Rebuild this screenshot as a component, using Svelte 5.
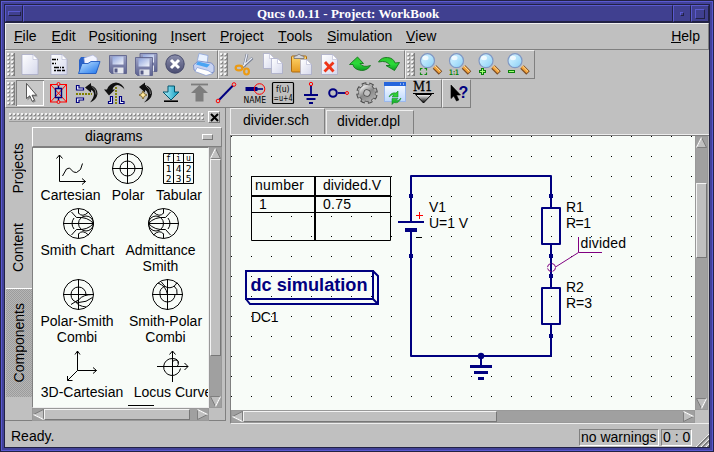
<script>
  const menus = [
    ['F', 'ile', 37.5], ['E', 'dit', 37], ['P', 'ositioning', 82, 'o'], ['I', 'nsert', 49.5],
    ['P', 'roject', 58], ['T', 'ools', 49], ['S', 'imulation', 79], ['V', 'iew', 40]
  ];

  const page = (x, y, w, h) =>
    `<path d="M${x} ${y}h${w - 5}l5 5v${h - 5}h${-w}z" fill="url(#paper)" stroke="#a3a6c4" stroke-width=".7"/><path d="M${x + w - 5} ${y}v5h5z" fill="#fff" stroke="#b3b6d0" stroke-width=".6"/>`;
  const floppy = (x, y) =>
    `<path d="M${x} ${y}h17v18h-15l-2-2z" fill="url(#steel)" stroke="#555a86" stroke-width=".8"/><rect x="${x + 3}" y="${y + 1}" width="11" height="8" fill="url(#label)"/><rect x="${x + 4}" y="${y + 12}" width="10" height="6" fill="#e6e8ee"/><rect x="${x + 5}" y="${y + 13}" width="3" height="4" fill="#555a86"/>`;
  const lens = (x) =>
    `<path d="M${x + 7} 67l6 6" stroke="#7a4a20" stroke-width="5"/><path d="M${x + 7} 66.6l5.600 5.600" stroke="#f3a43c" stroke-width="3"/><path d="M${x + 7.6} 66l5.400 5.400" stroke="#ffe0a0" stroke-width="1"/><circle cx="${x}" cy="60.700" r="7" fill="url(#glass)" stroke="#8098c4" stroke-width="1.200"/><ellipse cx="${x - 2}" cy="58" rx="3" ry="2.200" fill="#fff" opacity=".75"/>`;

  const fileIcons = [
    page(21, 54.5, 16, 20),
    page(50, 54.5, 16, 20) + `<path d="M51 59.500h4m1 0h1M51 63.500h2m1 0h1M53 67.500h5m1 0h1m1 0h2M53 70.500h2m1 0h4m1 0h3" stroke="#000" stroke-width="1.300"/>`,
    `<path d="M78 60l2-3h6l2 2h8v13h-18z" fill="#2a62c8"/><path d="M83 58l9-3 4 3v8h-12z" fill="#f2f4ff" stroke="#a8b0dc" stroke-width=".6"/><path d="M77.500 73.500L81 63.500h6l3-2h9l-4 12z" fill="url(#blue)" stroke="#1d58c0" stroke-width=".9"/>`,
    floppy(108.5, 55.5),
    floppy(139, 53.5) + floppy(134.5, 57.5),
    `<circle cx="174" cy="64" r="9.200" fill="url(#dark)" stroke="#44486a"/><path d="M170 60l8 8m0-8l-8 8" stroke="#fff" stroke-width="3"/>`,
    `<path d="M196 62l2-8.500 9 2-1 9z" fill="#e9f2ff" stroke="#8ca4dc" stroke-width=".8"/><path d="M192.500 65l5-4 13 2 2.500 3v6l-7 2-13-4z" fill="#c9d4f2" stroke="#6d82c0" stroke-width=".8"/><path d="M197 61.500l12 3-3 3-11-3z" fill="#4aa4f4"/><path d="M196 67.500l11 3 5 3-7 2-11-4z" fill="#fff" stroke="#849ad2" stroke-width=".7"/>`
  ];
  const editIcons = [
    `<path d="M247 54l-3 13M252.500 58l-11 10" stroke="#70788c" stroke-width="2.600"/><path d="M247 54l-3 12M252 58l-10 9" stroke="#e8ecf6" stroke-width="1.300"/><ellipse cx="239" cy="68" rx="3.400" ry="2.300" fill="none" stroke="#eb9a14" stroke-width="2.200"/><ellipse cx="246.500" cy="71.500" rx="2.400" ry="3" fill="none" stroke="#eb9a14" stroke-width="2.200"/>`,
    page(263.5, 53.5, 11, 15) + page(271.5, 58.5, 11, 15),
    `<rect x="291.500" y="56" width="15" height="16" rx="1" fill="url(#gold)" stroke="#ae6b0e"/><path d="M294 58.500v-2l3-1q2-3 4 0l3 1v2z" fill="#d3d5dc" stroke="#6d6d76" stroke-width=".8"/>` + page(300.5, 59.5, 11, 15),
    page(321.5, 54.5, 16, 20) + `<path d="M325 62l8.500 9.500M333.500 62.500l-9 9" stroke="#ee3418" stroke-width="2.800"/>`,
    `<path d="M349.500 64.500l8-7.500 6 6.500h-3.500q3 4.500 10.500 2-3 5-9 5-8-1-8.500-6z" fill="url(#green)" stroke="#14761c" stroke-width=".9"/>`,
    `<path d="M399.500 62.500l-5 8-8.500-5h4q-3-5.500-11.500-3.500 3-5 9-4.500 6 .5 7.500 5.500z" fill="url(#green)" stroke="#14761c" stroke-width=".9"/>`
  ];
  const zoomIcons = [
    lens(427.5) + `<path d="M420.500 70.500v-2h2m2 0h2v2m0 2v2h-2m-2 0h-2v-2" fill="none" stroke="#118a11" stroke-width="1.200"/>`,
    lens(456.5) + `<text x="449" y="75" font-size="7.500" font-weight="bold" font-family="DejaVu Sans" fill="#0c850c" textLength="10" lengthAdjust="spacingAndGlyphs">1:1</text>`,
    lens(486) + `<path d="M479 71.500h7M482.500 68v7" stroke="#0b800b" stroke-width="3"/><path d="M480 71.500h5M482.500 69v5" stroke="#a4ff74" stroke-width="1"/>`,
    lens(515) + `<path d="M508 71.500h7" stroke="#0b800b" stroke-width="3"/><path d="M509 71.500h5" stroke="#a4ff74" stroke-width="1"/>`
  ];
  const bars = [
    { x: 5, start: 14, icons: fileIcons },
    { x: 218, start: 229, icons: editIcons },
    { x: 405, start: 416, icons: zoomIcons }
  ];
  const ends = [218, 405, 535];

  const tools = [
    `<path d="M25.500 84v15.500l3.300-3 2.200 5.300 2.800-1.300-2.500-5h4.500z" fill="#555" opacity=".5" transform="translate(1 1)"/><path d="M25.500 83.500v15l3.300-2.700 2.300 5.500 2.400-1.100-2.500-5h4.500z" fill="#fff" stroke="#333" stroke-width=".8"/>`,
    `<g fill="none" stroke="#f00"><rect x="49.500" y="84.500" width="16" height="17.500"/><path d="M49.500 84.500l16 17.500m0-17.500l-16 17.500"/></g><path d="M57.500 85v3M57.500 98v4M54.500 88.500h6v9h-6z" fill="none" stroke="#000080" stroke-width="1.400"/><g fill="#c0c0c0" stroke="#f00"><circle cx="57.500" cy="84" r="1.500"/><circle cx="57.500" cy="102" r="1.500"/></g>`,
    `<g fill="#fff" stroke="#000080" stroke-width="1.200"><path d="M75.500 85.500h2.500v2.500h4.500v2h-7z"/><path d="M75.500 102.500v-4.500h7v2h-4.500v2.500z"/></g><path d="M75 94h16" stroke="#808000" stroke-width="1.800" stroke-dasharray="2 1"/><path d="M84 87.500l6-4.500v2.500q6.500 2 6.500 8.500-1 6-7.500 8.500 4-5 4-8.500-.5-3.500-3-4v2.500z" fill="#111"/><path d="M91 86.500q4.500 3 4 8" fill="none" stroke="#888" stroke-width=".8"/>`,
    `<g fill="#fff" stroke="#000080" stroke-width="1.200"><path d="M111.500 96.500v7h-4v-2h2v-5z"/><path d="M118.500 96.500h2v5h2.500v2h-4.500z"/></g><path d="M115 87v17" stroke="#808000" stroke-width="1.800" stroke-dasharray="2 1"/><path d="M103 89.500h3q2-6 9-7 7 1 8.500 7-3-4-7-4.500-4 .5-5 4.500h2.500l-6 6z" fill="#111"/>`,
    `<path d="M138 87l6-4.500v2.500q7 2 7 9-1 6-8 8.500 5-4.500 4-8.500-1-3.500-3-4v2.500z" fill="#111"/><path d="M145 86q5 3 4.500 8" fill="none" stroke="#888" stroke-width=".8"/><path d="M142 91l1.300 2.700 2.700 1.300-2.700 1.300-1.300 2.700-1.300-2.700-2.700-1.300 2.700-1.300z" fill="#ffe9a0" stroke="#6b5010" stroke-width=".8"/>`,
    `<path d="M167 86h6.500v6h4.500l-8 8-8-8h5z" fill="url(#cyan)" stroke="#03556c"/><path d="M163 101.200h14" stroke="#000" stroke-width="1.600"/>`,
    `<path d="M190 84.500h17" stroke="#7d7d7d" stroke-width="1.800"/><path d="M198.500 85l8.500 8h-4.500v8.500h-8v-8.500h-4.500z" fill="#7d7d7d"/>`,
    `<path d="M218 100l14-14.500" stroke="#000080" stroke-width="2"/><g fill="#c0c0c0" stroke="#f00"><circle cx="217" cy="101" r="1.800"/><circle cx="233" cy="84.500" r="1.800"/></g>`,
    `<path d="M244.500 89h12" stroke="#000080" stroke-width="4"/><path d="M256 89h6" stroke="#000080" stroke-width="1.600"/><circle cx="258.500" cy="89" r="5.300" fill="none" stroke="#f00"/><text x="242.500" y="102.600" font-family="DejaVu Sans" font-size="8" textLength="22.500" lengthAdjust="spacingAndGlyphs">NAME</text>`,
    `<rect x="271.500" y="82.500" width="21" height="21" rx="1" fill="none" stroke="#000" stroke-width="1.200"/><text x="275" y="92" font-family="DejaVu Sans" font-size="8" textLength="13.500" lengthAdjust="spacingAndGlyphs">f(u)</text><text x="272.500" y="101" font-family="DejaVu Sans" font-size="8" textLength="19" lengthAdjust="spacingAndGlyphs">=u+4</text>`,
    `<path d="M310 86v8.500M303 95h14M305.500 99h9M308 103h4" stroke="#000080" stroke-width="1.800"/><circle cx="310" cy="84" r="1.700" fill="#c0c0c0" stroke="#f00"/>`,
    `<path d="M337 93h8" stroke="#000080" stroke-width="1.800"/><circle cx="332" cy="93" r="3.800" fill="none" stroke="#000080" stroke-width="2"/><circle cx="346" cy="93" r="1.500" fill="#c0c0c0" stroke="#f00"/>`,
    `<g transform="rotate(12 366 93)"><circle cx="366" cy="93" r="8.800" fill="none" stroke="#454545" stroke-width="4" stroke-dasharray="4.200 2.710"/><circle cx="366" cy="93" r="5.800" fill="none" stroke="#474747" stroke-width="5.800"/><circle cx="366" cy="93" r="8.600" fill="none" stroke="#a9a9a9" stroke-width="2.400" stroke-dasharray="3 3.754" stroke-dashoffset="-.4"/><circle cx="366" cy="93" r="5.800" fill="none" stroke="url(#metal)" stroke-width="4.400"/></g>`,
    `<rect x="383.500" y="82.500" width="21" height="19" fill="url(#window)" stroke="#9bb8ec"/><path d="M383 82h22v4h-22z" fill="#2565dd"/><path d="M399 84h1m2 0h1" stroke="#fff"/><path d="M388 97q2-5 7-4l2-2v6h-6l2-2q-2-1-5 2zM400 98q-2 6-7 4.500l-2 2v-6h6l-2 2q2 1 5-2.500z" fill="url(#green)" stroke="#16862a" stroke-width=".6"/>`,
    `<text x="412" y="91" font-family="DejaVu Serif" font-size="12" stroke="#000" stroke-width=".3" textLength="19.500" lengthAdjust="spacingAndGlyphs">M1</text><path d="M412 93.500h21" stroke="#000"/><path d="M414.500 94.500h16l-8 8.500z" fill="url(#fade)" stroke="#000"/>`
  ];
  const help = `<path d="M451 85v13.500l2.800-2.500 2.700 5 2.300-1-2.300-5h4z" fill="#000" stroke="#000" stroke-width=".6"/><text x="458.500" y="98" font-family="Liberation Sans" font-weight="bold" font-size="16" fill="#000080">?</text>`;

  const frame = '<circle cx="15.500" cy="15.500" r="15"/><path d="M0 15.500h31"/>';
  const smith = '<path d="M15.500 .5v5M15.500 25.500v5"/><circle cx="23" cy="15.500" r="7.500"/><path d="M30.500 15.500q-6-7-17-6l-5-5.500M30.500 15.500q-6 7-17 6l-5 5.500M15.500 5q4 5 10-1M15.500 26q4-5 10 1M11 10q-4 5.500 0 11"/>';
  const art = {
    cart: '<path d="M4.500 2v26.500h26M1.500 5.500l3-3.500 3 3.500M27 25.500l3.500 3-3.500 3M7.500 23l4-7 3-1 4 4 3 .5 4-3 2-6"/>',
    polar: '<circle cx="15.500" cy="15.500" r="15"/><circle cx="15.500" cy="15.500" r="7.500"/><path d="M0 15.500h31M15.500 0v31"/>',
    tab: '<path d="M.5 .5h30v30h-30zM.5 9.500h30M10.500 .5v30M20.500 .5v30"/><g stroke="none" fill="#000" font-family="DejaVu Sans Mono" text-anchor="middle"><g font-size="8"><text x="5.500" y="8">f</text><text x="15.500" y="8">i</text><text x="25.500" y="8">u</text></g><g font-size="9.500"><text x="5.500" y="19">1</text><text x="15.500" y="19">4</text><text x="25.500" y="19">2</text><text x="5.500" y="29">2</text><text x="15.500" y="29">3</text><text x="25.500" y="29">5</text></g></g>',
    smith: frame + smith,
    adm: frame + `<g transform="translate(31 0) scale(-1 1)">${smith}</g>`,
    ps: frame + '<path d="M15.500 0v31M8 15.500a7.500 7.500 0 0 1 15 0M8 15.500q0 7 7.500 8 8 0 14-5M30 15.500q-10 0-14 5l-8 5M13 23q2 4 10 5"/>',
    sp: frame + '<path d="M15.500 0v31M8 15.500a7.500 7.500 0 0 0 15 0M6 4q8 3 9.500 11.500M9 2.500l4 5q5 3 10-1l2-3M8 15q-1-5 5-8M22 7q4 3 3 8"/>',
    d3: '<path d="M11.500 1v19.500h19M9 4.500l2.500-3.500 2.500 3.500M27 17.500l3.500 3-3.500 3M11.500 20.500l-10 10M1.500 26v4.500h5"/>',
    locus: '<path d="M0 16.500h31M15.500 1v31M12.500 4.500l3-3.500 3 3.500M27.500 13l3.500 3.500-3.500 3.500M15.500 11.500q4-3 5.500 0 1 4-1 5M15.500 8.500a8.500 8.500 0 1 0 8 10M15.500 8.500q6 0 6 5"/>'
  };
  const rows = [
    { h: 55, items: [['Cartesian', 'cart', 7, 61, 0], ['Polar', 'polar', 10, 34, 0], ['Tabular', 'tab', 9, 50, 0]] },
    { h: 71, items: [['Smith Chart', 'smith', 7, 75, 1], ['Admittance Smith', 'adm', 10, 71, 3]] },
    { h: 71, items: [['Polar-Smith Combi', 'ps', 7, 74, 2], ['Smith-Polar Combi', 'sp', 14, 75, 2]] },
    { h: 55, items: [['3D-Cartesian', 'd3', 7, 84, 0], ['Locus Curve', 'locus', 10, 78, 0]] }
  ];
</script>

{#snippet arrow(dir)}
  <svg class="arrow" width="12" height="12" viewBox="0 0 12 12">
    <g transform={`rotate(${dir} 6 6)`}>
      <path d="M6 .5L.5 11.500h11z" fill="#c0c0c0" stroke="#777" />
      <path d="M6 .5L.5 11.500" stroke="#fff" stroke-width="1.200" />
    </g>
  </svg>
{/snippet}

<div class="frame">
  <div class="title">
    <div class="wbtn"><i class="bar"></i></div>
    <div class="caption"><span>Qucs 0.0.11 - Project: WorkBook</span></div>
    <div class="wbtn"><i class="small"></i></div>
    <div class="wbtn last"><i class="square"></i></div>
  </div>

  <div class="menu">
    {#each menus as m}
      <span style:width="{m[2]}px">{#if m[3]}P<u>o</u>sitioning{:else}<u>{m[0]}</u>{m[1]}{/if}</span>
    {/each}
    <span class="help"><u>H</u>elp</span>
  </div>

  <div class="tools first">
    {#each bars as b, i}
      <div class="tbar" style:width="{ends[i] - b.x}px">
        <i class="grip"></i>
        {#each b.icons as ic, k}
          <svg width="29" height="27" viewBox="{b.start + 29 * k} 51 29 27">{@html ic}</svg>
        {/each}
      </div>
    {/each}
  </div>

  <div class="tools">
    <div class="tbar" style:width="437px">
      <i class="grip"></i>
      <span class="pad"></span>
      {#each tools as ic, k}
        <svg class:on={k === 0} width="28" height="26" viewBox="{15 + 28 * k} 80 28 26">{@html ic}</svg>
      {/each}
    </div>
    <div class="tbar" style:width="29px">
      <svg width="27" height="26" viewBox="443 80 27 26">{@html help}</svg>
    </div>
  </div>

  <div class="main">
    <div class="dock">
      <div class="dockhead">
        <i class="dots"></i>
        <button aria-label="Close"><svg width="11" height="11" viewBox="0 0 11 11"><path d="M2 2l7 7M9 2l-7 7" stroke="#000" stroke-width="2" /></svg></button>
      </div>
      <div class="dockbody">
        <div class="vtabs">
          <div style:height="79px"><span>Projects</span></div>
          <div style:height="80px"><span>Content</span></div>
          <div class="sel"><span>Components</span></div>
        </div>
        <div class="panel">
          <div class="combo"><span>diagrams</span><i></i></div>
          <div class="listwrap">
            <div class="left">
              <div class="list">
                {#each rows as r}
                  <div class="row" style:height="{r.h}px">
                    {#each r.items as it}
                      <div class="item" class:single={r.h === 55} style:margin-left="{it[2]}px" style:width="{it[3]}px">
                        <svg style:margin-left="{it[4] * 2}px" width="32" height="33" viewBox="0 0 32 33" fill="none" stroke="#000" stroke-width="1">{@html art[it[1]]}</svg>
                        <span>{it[0]}</span>
                      </div>
                    {/each}
                  </div>
                {/each}
                <div class="peek"></div>
              </div>
              <div class="hs">{@render arrow(-90)}<i class="thumb" style:width="146px"></i><i class="fill"></i>{@render arrow(90)}</div>
            </div>
            <div class="vs">{@render arrow(0)}<i class="thumb" style:height="197px"></i><i class="fill"></i>{@render arrow(180)}</div>
          </div>
        </div>
      </div>
    </div>

    <div class="work">
      <div class="tabs"><div class="tab cur">divider.sch</div><div class="tab other">divider.dpl</div></div>
      <div class="view">
        <div class="canvascol">
          <svg class="canvas" width="464" height="274" viewBox="231 136 464 274">
            <defs><pattern id="grid" x="231" y="136" width="20" height="20" patternUnits="userSpaceOnUse"><rect width="1" height="1" fill="#000" /></pattern></defs>
            <g fill="none" stroke="#000">
              <path d="M251.500 176.500h139v64h-139zM251 212.500h139" />
              <path d="M251 196h139M315 176v65" stroke-width="2" />
            </g>
            <rect x="231" y="136" width="464" height="274" fill="url(#grid)" />
            <g class="t">
              <text x="255" y="190" textLength="49">number</text>
              <text x="323" y="190" textLength="58">divided.V</text>
              <text x="259" y="209">1</text>
              <text x="323" y="209" textLength="28">0.75</text>
              <text x="429" y="212">V1</text>
              <text x="429" y="228" textLength="39">U=1 V</text>
              <text x="566" y="212">R1</text>
              <text x="566" y="228" textLength="25">R=1</text>
              <text x="580.500" y="248" textLength="45.500">divided</text>
              <text x="566" y="292">R2</text>
              <text x="566" y="308" textLength="26">R=3</text>
              <text x="251" y="322" textLength="27.500">DC1</text>
              <text class="dc" x="250.500" y="291" textLength="117" lengthAdjust="spacingAndGlyphs">dc simulation</text>
            </g>
            <g fill="none" stroke="#000080" stroke-width="2">
              <path d="M246 271h127v28H246z" />
              <path d="M373 271l5 5v28H250l-4-5" />
              <path d="M373 299l5 5" />
              <path d="M411 222v-46h140v32M398 222h26M411 230v126h140v-32M551 244v44M542 208h18v36h-18zM542 288h18v36h-18z" stroke-linejoin="round" />
              <path d="M405 230h12" stroke-width="4" />
              <path d="M481 356v10" />
              <path d="M470 366.500h22M474 372.500h14M478 378.500h6" stroke-width="3" />
            </g>
            <g fill="#000080">
              <path d="M409 194h4v4h-4zM409 254h4v4h-4zM549 194h4v4h-4zM549 254h4v4h-4zM549 274h4v4h-4zM549 334h4v4h-4z" />
              <circle cx="481" cy="356" r="3.200" />
            </g>
            <path d="M416 215.500h7M419.500 212v7" stroke="#f00" />
            <path d="M416 237.500h6" stroke="#000" />
            <g fill="none" stroke="#800080">
              <path d="M578.500 237v15.500H602M578.500 252.500L555.500 267" />
              <circle cx="551.500" cy="267.500" r="4" stroke-dasharray="5 1.300" />
            </g>
          </svg>
          <div class="hs wide">{@render arrow(-90)}<i class="thumb" style:width="254px"></i><i class="fill"></i>{@render arrow(90)}</div>
        </div>
        <div class="vcol">
          <div class="vs">{@render arrow(0)}<i class="fill" style:flex="0 0 35px"></i><i class="thumb" style:height="75px"></i><i class="fill"></i>{@render arrow(180)}</div>
        </div>
      </div>
    </div>
  </div>

  <div class="status">
    <span class="ready">Ready.</span>
    <span class="cell" style:width="80px">no warnings</span>
    <span class="cell" style:width="31px">0 : 0</span>
    <svg width="15" height="15" viewBox="0 0 15 15"><path d="M2 15L15 2M7 15l8-8M12 15l3-3" stroke="#fff" /><path d="M3.500 15L15 3.500M8.500 15l6.500-6.500M13.500 15l1.500-1.500" stroke="#777" stroke-width="1.600" /></svg>
  </div>
</div>

<svg class="defs" width="0" height="0">
  <defs>
    <linearGradient id="paper" x2="1" y2="1"><stop stop-color="#fff" /><stop offset="1" stop-color="#d5d8ec" /></linearGradient>
    <linearGradient id="label" x2="1" y2="1"><stop stop-color="#8fa4dc" /><stop offset="1" stop-color="#f4f6fc" /></linearGradient>
    <linearGradient id="steel" x2="0" y2="1"><stop stop-color="#9da3c6" /><stop offset="1" stop-color="#5d6290" /></linearGradient>
    <linearGradient id="blue" x2="1" y2="1"><stop stop-color="#c3e5ff" /><stop offset="1" stop-color="#1c74ec" /></linearGradient>
    <linearGradient id="dark" x2="0" y2="1"><stop stop-color="#8a8eac" /><stop offset="1" stop-color="#4a4d72" /></linearGradient>
    <linearGradient id="gold" x2="0" y2="1"><stop stop-color="#ffd66b" /><stop offset="1" stop-color="#e59a22" /></linearGradient>
    <linearGradient id="green" x2="0" y2="1"><stop stop-color="#2fc62f" /><stop offset=".5" stop-color="#2cdb3a" /><stop offset="1" stop-color="#0e9c22" /></linearGradient>
    <linearGradient id="glass" x2="1" y2="1"><stop stop-color="#d8f2ff" /><stop offset=".5" stop-color="#b4e4fc" /><stop offset="1" stop-color="#86cdf5" /></linearGradient>
    <linearGradient id="cyan" x2="1" y2="0"><stop stop-color="#b6f4ff" /><stop offset="1" stop-color="#0898bd" /></linearGradient>
    <linearGradient id="metal" x2="1" y2="1"><stop stop-color="#eee" /><stop offset=".5" stop-color="#888" /><stop offset="1" stop-color="#aaa" /></linearGradient>
    <linearGradient id="window" x2="0" y2="1"><stop stop-color="#fff" /><stop offset="1" stop-color="#bcd8ff" /></linearGradient>
    <linearGradient id="fade" x2="0" y2="1"><stop stop-color="#fff" /><stop offset="1" stop-color="#000" /></linearGradient>
  </defs>
</svg>

<style>
  :global(body) { margin: 0; overflow: hidden; }
  .defs { display: block; }
  .frame {
    box-sizing: border-box; width: 714px; height: 452px; padding: 5px;
    font: 14px/16px "Liberation Sans", Arial, sans-serif; color: #000; background: #c0c0c0;
    display: flex; flex-direction: column;
    box-shadow: inset 0 0 0 1px #222244, inset 0 0 0 2px #5a5ad0, inset 0 0 0 4px #42429a, inset 0 0 0 5px #222244;
  }
  .frame > * { flex: none; box-sizing: border-box; }
  .title { display: flex; height: 18px; background: #404090; border-bottom: 1px solid #222244; }
  .wbtn, .caption { box-sizing: border-box; border: 1px solid; border-color: #5a5ad0 #222244 #222244 #5a5ad0; display: flex; align-items: center; justify-content: center; }
  .wbtn { width: 18px; }
  .caption { flex: 1; color: #fff; font: bold 13px/16px "Liberation Serif", serif; padding-left: 0; }
  .caption span { white-space: nowrap; }
  .wbtn i { border: 1px solid; border-color: #5a5ad0 #222244 #222244 #5a5ad0; }
  .bar { width: 11px; height: 3px; }
  .small { width: 2px; height: 2px; }
  .square { width: 8px; height: 8px; }
  .menu { height: 27px; display: flex; padding: 4px 0 0 8px; border: 1px solid; border-color: #f0f0f0 #808080 #808080 #f0f0f0; white-space: nowrap; }
  .menu u { text-decoration: none; box-shadow: 0 -1px 0 #000 inset; display: inline-block; height: 15px; }
  .menu .help { margin-left: auto; margin-right: 8px; }
  .tools { display: flex; height: 29px; }
  .tbar { box-sizing: border-box; display: flex; height: 29px; border: 1px solid; border-color: #eee #808080 #808080 #eee; }
  .tbar svg { flex: none; }
  .grip { flex: none; width: 7px; height: 23px; margin: 2px 0 0 1px; border-right: 1px solid #808080;
    background: radial-gradient(circle at 1px 1px, #f4f4f4 .7px, transparent .9px) 0 0/4px 4px, radial-gradient(circle at 1px 1px, #8a8a8a .7px, transparent .9px) 1px 1px/4px 4px; }
  .first .tbar:not(:first-child) .grip { margin-right: 1px; }
  .pad { width: 1px; }
  .on { box-shadow: inset 1px 1px #808080, inset -1px -1px #fff; background: #c8c8c8; }
  .main { height: 317px; display: flex; }
  .dock { width: 221px; box-sizing: border-box; height: 313px; border-right: 1px solid #808080; border-bottom: 1px solid #808080; }
  .dockhead { height: 18px; display: flex; padding: 4px 0 0 4px; box-sizing: border-box; }
  .dots { width: 196px; height: 8px; margin-top: 1px; border-bottom: 1px solid #999;
    background: radial-gradient(circle at 1px 1px, #f4f4f4 .7px, transparent .9px) 0 0/4px 4px, radial-gradient(circle at 1px 1px, #8a8a8a .7px, transparent .9px) 1px 1px/4px 4px; }
  .dockhead button { margin: -1px 0 0 3px; padding: 0; width: 12px; height: 12px; border: 1px solid; border-color: #fff #777 #777 #fff; background: #c0c0c0; display: grid; place-items: center; box-sizing: border-box; }
  .dockbody { display: flex; }
  .vtabs { width: 27px; }
  .vtabs > div { display: flex; align-items: center; justify-content: center; }
  .vtabs > div:first-child { margin-top: 3px; }
  .vtabs span { writing-mode: vertical-rl; transform: rotate(180deg); margin-right: 1px; }
  .vtabs .sel { box-sizing: border-box; height: 109px; margin-left: 1px; border-top: 1px solid #fff; background: repeating-conic-gradient(#9c9c9c 0 25%, #b6b6b6 0 50%) 0 0/2px 2px; }
  .panel { width: 190px; }
  .combo { box-sizing: border-box; height: 20px; margin-top: 1px; border: 1px solid; border-color: #fff #808080 #808080 #fff; display: flex; align-items: center; }
  .combo span { flex: 1; padding-left: 52px; margin-top: -2px; }
  .combo i { width: 9px; height: 4px; border: 1px solid; border-color: #fff #777 #777 #fff; margin-right: 8px; }
  .listwrap { display: flex; height: 274px; }
  .left { width: 177px; }
  .list { box-sizing: border-box; height: 261px; border: 1px solid; border-color: #808080 #eee #eee #808080; background: #f8fcf8; overflow: hidden; padding-top: 5px; }
  .row { display: flex; box-sizing: border-box; }
  .item { flex: none; display: flex; flex-direction: column; align-items: center; text-align: center; }
  .item svg { flex: none; margin-bottom: 1px; }
  .item.single span { white-space: nowrap; }
  .peek { width: 26px; margin: 0 0 0 95px; border-top: 1px solid #000; }
  .hs, .vs { display: flex; background: #a0a0a0; box-sizing: border-box; border: 1px solid #999; }
  .hs { height: 13px; }
  .vs { width: 13px; height: 261px; flex-direction: column; }
  .hs .arrow, .vs .arrow { flex: none; width: 11px; height: 11px; }
  .thumb { box-sizing: border-box; flex: none; background: #c0c0c0; border: 1px solid; border-color: #f4f4f4 #777 #777 #f4f4f4; }
  .fill { flex: 1; }
  .work { flex: 1; padding-left: 4px; }
  .tabs { height: 27px; display: flex; border-bottom: 1px solid #eee; box-sizing: border-box; border-left: 1px solid #eee; }
  .tab { box-sizing: border-box; white-space: nowrap; }
  .tab.cur { width: 94px; height: 26px; padding: 3px 0 0 12px; border-right: 1px solid #808080; border-top: 1px solid #eee; }
  .tab.other { width: 88px; height: 24px; margin: 2px 0 0 1px; padding: 2px 0 0 10px; border: solid; border-width: 1px 1px 0 1px; border-color: #eee #808080 #808080 #eee; }
  .view { display: flex; border: solid; border-width: 1px 0 1px 1px; border-color: #808080 #eee #eee #808080; }
  .canvascol { width: 464px; flex: none; }
  .canvas { display: block; background: #f8fcf8; }
  .vcol { flex: 1; }
  .vcol .vs { height: 274px; }
  .hs.wide { height: 13px; }
  .t { font: 14px "Liberation Sans", Arial, sans-serif; fill: #000; }
  .dc { font-size: 18px; font-weight: bold; fill: #000080; }
  .status { height: 22px; display: flex; padding: 0 0 0 6px; }
  .ready { flex: 1; padding-top: 3px; }
  .cell { box-sizing: border-box; height: 17px; margin: 4px 2px 0 0; line-height: 15px; padding-left: 1px; white-space: nowrap; border: 1px solid; border-color: #808080 #fff #fff #808080; }
  .status svg { margin-top: 7px; }
</style>
